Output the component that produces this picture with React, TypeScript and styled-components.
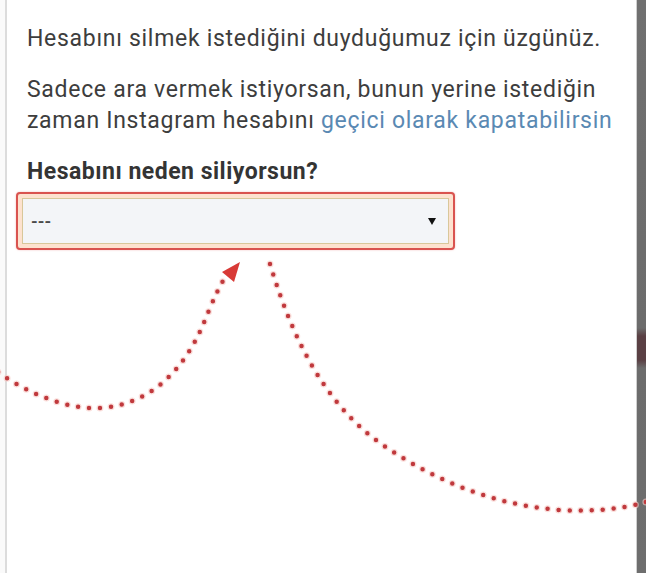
import React from "react";
import styled, { createGlobalStyle } from "styled-components";

const GlobalStyle = createGlobalStyle`
    html, body {
        margin: 0;
        padding: 0;
        background: #fafafa;
    }
    body {
        font-family: Roboto, "Liberation Sans", Arial, sans-serif;
    }
`;

const Page = styled.div`
    position: relative;
    display: flex;
    width: 646px;
    height: 573px;
    overflow: hidden;
    padding-left: 5px;
    box-sizing: border-box;
`;

const Panel = styled.div`
    flex: 1;
    background: #ffffff;
    border-left: 2px solid #dcdcdc;
    border-right: 1px solid #cfcfcf;
    padding: 23px 8px 0 20px;
    box-sizing: border-box;
`;

const Edge = styled.div`
    width: 9px;
    background: linear-gradient(
        to bottom,
        #707070 0px,
        #6c6c6c 328px,
        #5a4044 336px,
        #5a4044 360px,
        #6c6c6c 368px,
        #6e6e6e 100%
    );
`;

const Paragraph = styled.p`
    margin: 0 0 ${props => props.$gap || 0}px 0;
    font-size: 23px;
    line-height: 31px;
    color: #3d3d3d;
    letter-spacing: 0.7px;
`;

const Link = styled.span`
    color: #5a89b3;
`;

const Heading = styled.h4`
    margin: 0 0 5px 0;
    font-size: 23px;
    line-height: 30px;
    font-weight: 700;
    letter-spacing: 0.5px;
    color: #343434;
`;

const SelectFrame = styled.div`
    width: 439px;
    height: 58px;
    margin-left: -11px;
    padding: 4px;
    box-sizing: border-box;
    border: 2px solid #d9534f;
    border-radius: 4px;
    background: #fde2cf;
    box-shadow: 0 0 2px rgba(217, 83, 79, 0.4);
`;

const SelectBox = styled.div`
    display: flex;
    align-items: center;
    justify-content: space-between;
    height: 100%;
    padding: 0 12px 0 8px;
    box-sizing: border-box;
    border: 1.5px solid #d8c79a;
    background: #f3f5f8;
    font-size: 17px;
    font-weight: 700;
    color: #4a4a4a;
`;

const Caret = styled.span`
    width: 0;
    height: 0;
    border-left: 4px solid transparent;
    border-right: 4px solid transparent;
    border-top: 7px solid #111111;
`;

const Overlay = styled.svg`
    position: absolute;
    left: 0;
    top: 0;
    pointer-events: none;
`;

const Dotted = ({ d }: { d: string }) => (
    <>
        <path d={d} fill="none" stroke="#f6c9c4" strokeWidth={7} strokeLinecap="round" strokeDasharray="0 11" opacity={0.6} />
        <path d={d} fill="none" stroke="#c0393d" strokeWidth={4.5} strokeLinecap="round" strokeDasharray="0 11" />
    </>
);

export default function App() {
    return (
        <>
            <GlobalStyle />
            <Page>
                <Panel>
                    <Paragraph $gap={20}>Hesabını silmek istediğini duyduğumuz için üzgünüz.</Paragraph>
                    <Paragraph $gap={21}>
                        Sadece ara vermek istiyorsan, bunun yerine istediğin zaman Instagram hesabını{" "}
                        <Link>geçici olarak kapatabilirsin</Link>
                    </Paragraph>
                    <Heading>Hesabını neden siliyorsun?</Heading>
                    <SelectFrame>
                        <SelectBox>
                            <span>---</span>
                            <Caret />
                        </SelectBox>
                    </SelectFrame>
                </Panel>
                <Edge />
                <Overlay width={646} height={573} viewBox="0 0 646 573">
                    <Dotted d="M -2 372 C 30 395, 70 410, 100 408 C 150 405, 185 370, 205 320 C 214 298, 220 285, 226 276" />
                    <polygon points="222,272 240,262 234,282" fill="#d83a36" />
                    <Dotted d="M 270 264 C 290 330, 320 400, 380 443 C 430 478, 490 505, 560 510 C 600 512, 625 508, 646 502" />
                </Overlay>
            </Page>
        </>
    );
}
